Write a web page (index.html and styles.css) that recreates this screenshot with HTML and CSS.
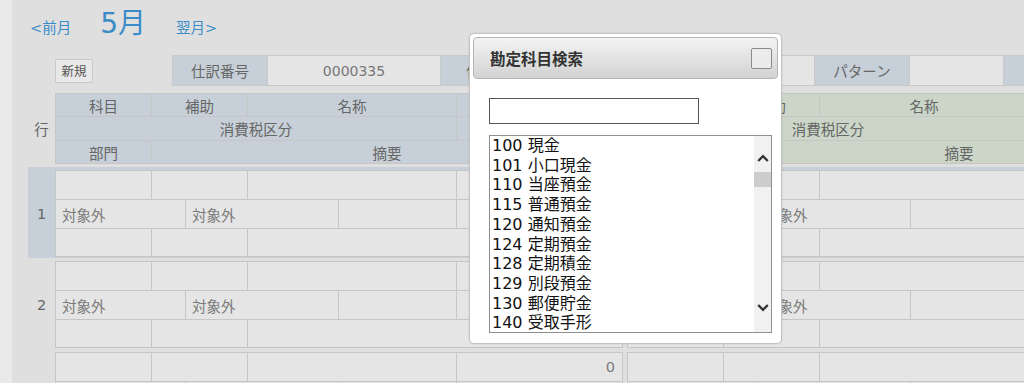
FILE: index.html
```html
<!DOCTYPE html>
<html lang="ja">
<head>
<meta charset="utf-8">
<title>仕訳入力</title>
<link rel="stylesheet" href="styles.css">
</head>
<body>
<div class="page">
  <aside class="strip"></aside>
  <main class="main">
    <nav class="month">
      <a class="month-link" href="#">&lt;前月</a>
      <span class="month-current">5月</span>
      <a class="month-link" href="#">翌月&gt;</a>
    </nav>

    <div class="toolbar">
      <button class="btn-new" type="button">新規</button>
      <div class="info">
        <div class="info-label">仕訳番号</div>
        <div class="info-value">0000335</div>
        <div class="info-label">伝票日</div>
        <div class="info-value wide"></div>
        <div class="info-label">パターン</div>
        <div class="info-value narrow"></div>
        <div class="info-label"></div>
      </div>
    </div>

    <div class="sheet">
      <div class="entry head">
        <div class="row-no">行</div>
        <div class="ledger head-grid debit">
          <div class="c c1">科目</div><div class="c c23">補助</div><div class="c c45">名称</div><div class="c c6">金額</div>
          <div class="c c15">消費税区分</div><div class="c c6">税額</div>
          <div class="c c1">部門</div><div class="c c26">摘要</div>
        </div>
        <div class="ledger head-grid credit">
          <div class="c c1">科目</div><div class="c c23">補助</div><div class="c c45">名称</div><div class="c c6">金額</div>
          <div class="c c15">消費税区分</div><div class="c c6">税額</div>
          <div class="c c1">部門</div><div class="c c26">摘要</div>
        </div>
      </div>

      <div class="entry selected">
        <div class="row-no">1</div>
        <div class="ledger data-grid">
          <div class="c c1"></div><div class="c c23"></div><div class="c c45"></div><div class="c c6 amt">0</div>
          <div class="c c12">対象外</div><div class="c c34">対象外</div><div class="c c5"></div><div class="c c6 amt"></div>
          <div class="c c1"></div><div class="c c23"></div><div class="c c46"></div>
        </div>
        <div class="ledger data-grid">
          <div class="c c1"></div><div class="c c23"></div><div class="c c45"></div><div class="c c6 amt">0</div>
          <div class="c c12">対象外</div><div class="c c34">対象外</div><div class="c c5"></div><div class="c c6 amt"></div>
          <div class="c c1"></div><div class="c c23"></div><div class="c c46"></div>
        </div>
      </div>

      <div class="entry">
        <div class="row-no">2</div>
        <div class="ledger data-grid">
          <div class="c c1"></div><div class="c c23"></div><div class="c c45"></div><div class="c c6 amt">0</div>
          <div class="c c12">対象外</div><div class="c c34">対象外</div><div class="c c5"></div><div class="c c6 amt"></div>
          <div class="c c1"></div><div class="c c23"></div><div class="c c46"></div>
        </div>
        <div class="ledger data-grid">
          <div class="c c1"></div><div class="c c23"></div><div class="c c45"></div><div class="c c6 amt">0</div>
          <div class="c c12">対象外</div><div class="c c34">対象外</div><div class="c c5"></div><div class="c c6 amt"></div>
          <div class="c c1"></div><div class="c c23"></div><div class="c c46"></div>
        </div>
      </div>

      <div class="entry">
        <div class="row-no">3</div>
        <div class="ledger data-grid">
          <div class="c c1"></div><div class="c c23"></div><div class="c c45"></div><div class="c c6 amt">0</div>
          <div class="c c12">対象外</div><div class="c c34">対象外</div><div class="c c5"></div><div class="c c6 amt"></div>
          <div class="c c1"></div><div class="c c23"></div><div class="c c46"></div>
        </div>
        <div class="ledger data-grid">
          <div class="c c1"></div><div class="c c23"></div><div class="c c45"></div><div class="c c6 amt">0</div>
          <div class="c c12">対象外</div><div class="c c34">対象外</div><div class="c c5"></div><div class="c c6 amt"></div>
          <div class="c c1"></div><div class="c c23"></div><div class="c c46"></div>
        </div>
      </div>
    </div>
  </main>

  <div class="dialog" role="dialog" aria-label="勘定科目検索">
    <div class="dialog-title">
      <span class="dialog-heading">勘定科目検索</span>
      <button class="dialog-close" type="button" aria-label="閉じる"></button>
    </div>
    <div class="dialog-body">
      <input class="search" type="text">
      <div class="listbox">
        <ul class="options">
          <li>100 現金</li>
          <li>101 小口現金</li>
          <li>110 当座預金</li>
          <li>115 普通預金</li>
          <li>120 通知預金</li>
          <li>124 定期預金</li>
          <li>128 定期積金</li>
          <li>129 別段預金</li>
          <li>130 郵便貯金</li>
          <li>140 受取手形</li>
        </ul>
        <div class="scroll">
          <svg class="chev up" width="12" height="8" viewBox="0 0 12 8"><path d="M1.2 7 L6 2.2 L10.8 7" fill="none" stroke="#333" stroke-width="2.4"/></svg>
          <div class="thumb"></div>
          <svg class="chev down" width="12" height="8" viewBox="0 0 12 8"><path d="M1.2 1 L6 5.8 L10.8 1" fill="none" stroke="#333" stroke-width="2.4"/></svg>
        </div>
      </div>
    </div>
  </div>
</div>
</body>
</html>
```

FILE: styles.css
```css
* { box-sizing: border-box; }

html, body {
  margin: 0;
  height: 100%;
  overflow: hidden;
}

body {
  background: #dfdfdf;
  font-family: "DejaVu Sans", "Noto Sans CJK JP", sans-serif;
  color: #6a6a6a;
}

.page {
  display: flex;
  min-height: 100%;
  width: max-content;
}

.strip {
  width: 12px;
  flex-shrink: 0;
  background: #e9e9e9;
}

.main {
  flex-shrink: 0;
  padding-left: 16px;
}

/* month navigation */
.month {
  display: flex;
  align-items: baseline;
  height: 42px;
  padding: 6px 0 0 2px;
  line-height: 36px;
}

.month-link {
  color: #3a8cc8;
  text-decoration: none;
  font-size: 14.5px;
}

.month-current {
  color: #3a8cc8;
  font-size: 28px;
  margin: 0 30px 0 29px;
}

/* toolbar */
.toolbar {
  display: flex;
  align-items: center;
  margin-top: 13px;
  padding-left: 27px;
}

.btn-new {
  width: 38px;
  height: 24px;
  padding: 0;
  margin-right: 79px;
  background: #e8e8e8;
  border: 1px solid #c9c9c9;
  border-radius: 1px;
  color: #555;
  font-family: "Noto Sans CJK JP", sans-serif;
  font-size: 12.5px;
  line-height: 20px;
}

.info {
  display: flex;
  height: 31px;
  gap: 1px;
  background: #c9c9c9;
  border: 1px solid #c9c9c9;
}

.info-label,
.info-value {
  display: flex;
  align-items: center;
  justify-content: center;
  font-size: 14.5px;
}

.info-label {
  width: 94px;
  background: #c7d0d8;
  color: #666;
}

.info-value {
  width: 172px;
  background: #e5e5e5;
  color: #777;
  font-size: 14px;
}

.info-value.wide { width: 278px; }
.info-value.narrow { width: 93px; }

/* sheet */
.sheet {
  margin-top: 7px;
}

.entry {
  display: flex;
}

.entry.head {
  margin-bottom: 3px;
}

.entry:not(.head) {
  padding: 3px 0 1px;
}

.entry.selected {
  background: #c7d0d8;
}

.row-no {
  width: 27px;
  display: flex;
  align-items: center;
  justify-content: center;
  font-size: 14.5px;
  color: #666;
}

.ledger {
  width: 568px;
  display: grid;
  grid-template-columns: 95px 33px 61px 90px 117px 165px;
  gap: 1px;
  background: #c6c6c6;
  border: 1px solid #c6c6c6;
}

.ledger + .ledger {
  margin-left: 4px;
}

.head-grid {
  grid-template-rows: 22px 23px 22px;
}

.data-grid {
  grid-template-rows: 28px 28px 27px;
}

.c {
  display: flex;
  align-items: center;
  font-size: 14.5px;
  background: #e5e5e5;
  color: #7a7a7a;
  padding: 0 6px;
  white-space: nowrap;
  overflow: hidden;
}

.head-grid .c {
  justify-content: center;
  color: #666;
  background: #c7d0d8;
}

.head-grid.credit .c {
  background: #cbd6c8;
}

.c.amt {
  justify-content: flex-end;
  padding-right: 7px;
}

.c1 { grid-column: 1; }
.c5 { grid-column: 5; }
.c6 { grid-column: 6; }
.c12 { grid-column: 1 / 3; }
.c23 { grid-column: 2 / 4; }
.c34 { grid-column: 3 / 5; }
.c45 { grid-column: 4 / 6; }
.c15 { grid-column: 1 / 6; }
.c26 { grid-column: 2 / 7; }
.c46 { grid-column: 4 / 7; }

/* dialog */
.dialog {
  position: absolute;
  left: 469px;
  top: 33px;
  width: 313px;
  height: 311px;
  padding: 3px;
  background: #fff;
  border: 1px solid #c2c2c2;
  border-radius: 5px;
  box-shadow: 0 0 2px rgba(0, 0, 0, 0.12);
}

.dialog-title {
  display: flex;
  align-items: center;
  justify-content: space-between;
  height: 42px;
  padding: 0 5px 0 16px;
  border: 1px solid #b5b5b5;
  border-radius: 4px;
  background: linear-gradient(#f3f3f3, #d2d2d2);
}

.dialog-heading {
  font-family: "Noto Sans CJK JP", sans-serif;
  font-weight: bold;
  font-size: 15.5px;
  color: #333;
}

.dialog-close {
  width: 21px;
  height: 21px;
  padding: 0;
  background: #ececec;
  border: 1px solid #8a8a8a;
  border-radius: 2px;
}

.dialog-body {
  padding: 19px 6px 0 16px;
}

.search {
  display: block;
  width: 210px;
  height: 26px;
  margin: 0;
  border: 1px solid #555;
  background: #fff;
  padding: 0 4px;
}

.listbox {
  display: flex;
  width: 283px;
  height: 198px;
  margin-top: 11px;
  border: 1px solid #8f8f8f;
  background: #fff;
}

.options {
  flex: 1;
  margin: 0;
  padding: 0 0 0 2px;
  list-style: none;
  overflow: hidden;
  font-size: 16px;
  line-height: 19.7px;
  color: #111;
}

.options li {
  white-space: nowrap;
}

.scroll {
  width: 17px;
  display: flex;
  flex-direction: column;
  align-items: center;
  background: #f1f1f1;
}

.chev.up {
  margin-top: 18px;
}

.thumb {
  width: 17px;
  height: 15px;
  margin-top: 10px;
  background: #cdcdcd;
}

.chev.down {
  margin-top: auto;
  margin-bottom: 20px;
}
```
